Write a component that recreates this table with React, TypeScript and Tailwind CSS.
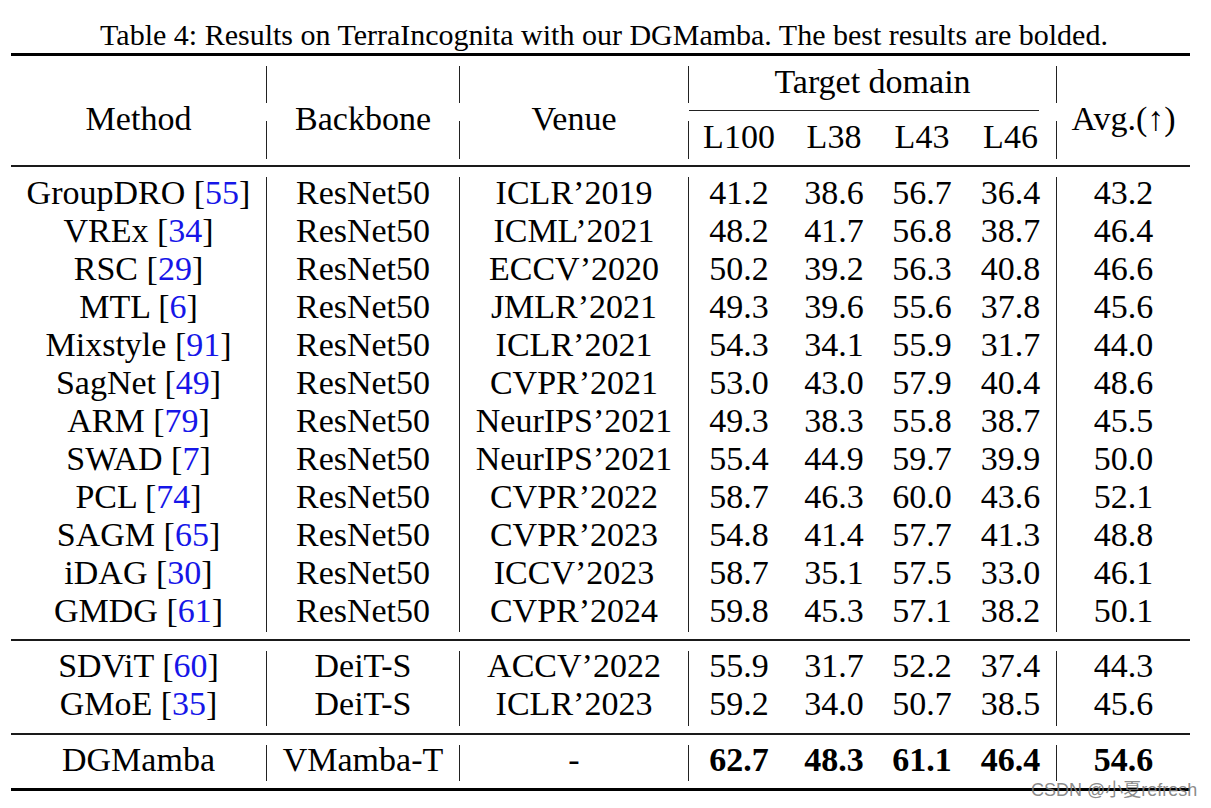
import React from 'react'

type Row = {
  method: string
  cite?:  string
  backbone: string
  venue:  string
  scores: string[]
  avg:    string
  bold?:  boolean
}

const RESNET: Row[] = [
  { method: 'GroupDRO', cite: '55', backbone: 'ResNet50', venue: 'ICLR’2019',    scores: ['41.2', '38.6', '56.7', '36.4'], avg: '43.2' },
  { method: 'VREx',     cite: '34', backbone: 'ResNet50', venue: 'ICML’2021',    scores: ['48.2', '41.7', '56.8', '38.7'], avg: '46.4' },
  { method: 'RSC',      cite: '29', backbone: 'ResNet50', venue: 'ECCV’2020',    scores: ['50.2', '39.2', '56.3', '40.8'], avg: '46.6' },
  { method: 'MTL',      cite: '6',  backbone: 'ResNet50', venue: 'JMLR’2021',    scores: ['49.3', '39.6', '55.6', '37.8'], avg: '45.6' },
  { method: 'Mixstyle', cite: '91', backbone: 'ResNet50', venue: 'ICLR’2021',    scores: ['54.3', '34.1', '55.9', '31.7'], avg: '44.0' },
  { method: 'SagNet',   cite: '49', backbone: 'ResNet50', venue: 'CVPR’2021',    scores: ['53.0', '43.0', '57.9', '40.4'], avg: '48.6' },
  { method: 'ARM',      cite: '79', backbone: 'ResNet50', venue: 'NeurIPS’2021', scores: ['49.3', '38.3', '55.8', '38.7'], avg: '45.5' },
  { method: 'SWAD',     cite: '7',  backbone: 'ResNet50', venue: 'NeurIPS’2021', scores: ['55.4', '44.9', '59.7', '39.9'], avg: '50.0' },
  { method: 'PCL',      cite: '74', backbone: 'ResNet50', venue: 'CVPR’2022',    scores: ['58.7', '46.3', '60.0', '43.6'], avg: '52.1' },
  { method: 'SAGM',     cite: '65', backbone: 'ResNet50', venue: 'CVPR’2023',    scores: ['54.8', '41.4', '57.7', '41.3'], avg: '48.8' },
  { method: 'iDAG',     cite: '30', backbone: 'ResNet50', venue: 'ICCV’2023',    scores: ['58.7', '35.1', '57.5', '33.0'], avg: '46.1' },
  { method: 'GMDG',     cite: '61', backbone: 'ResNet50', venue: 'CVPR’2024',    scores: ['59.8', '45.3', '57.1', '38.2'], avg: '50.1' },
]

const VIT: Row[] = [
  { method: 'SDViT', cite: '60', backbone: 'DeiT-S', venue: 'ACCV’2022', scores: ['55.9', '31.7', '52.2', '37.4'], avg: '44.3' },
  { method: 'GMoE',  cite: '35', backbone: 'DeiT-S', venue: 'ICLR’2023', scores: ['59.2', '34.0', '50.7', '38.5'], avg: '45.6' },
]

const OURS: Row[] = [
  { method: 'DGMamba', backbone: 'VMamba-T', venue: '-', scores: ['62.7', '48.3', '61.1', '46.4'], avg: '54.6', bold: true },
]

// widths of the four target-domain sub columns (L100, L38, L43, L46)
const SUB_W = ['w-[100px]', 'w-[90px]', 'w-[86px]', 'w-[91px]']

function Divider() {
  return <div className="w-px shrink-0 bg-[#222] mt-[10px] mb-[7px]" />
}

// header rules are broken where the cmidrule sits
function HeaderDivider() {
  return (
    <div className="w-px shrink-0 flex flex-col pt-[10px]">
      <div className="h-[37px] bg-[#222]" />
      <div className="h-[18px]" />
      <div className="h-[38px] bg-[#222]" />
    </div>
  )
}

function Cell({ children, bold }: { children: React.ReactNode; bold?: boolean }) {
  return (
    <div className={`h-[38px] leading-[38px] text-center whitespace-nowrap ${bold ? 'font-bold' : ''}`}>
      {children}
    </div>
  )
}

function Section({ rows, pad }: { rows: Row[]; pad: string }) {
  return (
    <div className="flex">
      <div className={`w-[255px] shrink-0 ${pad}`}>
        {rows.map(r => (
          <Cell key={r.method}>
            {r.method}
            {r.cite && <> [<span className="text-[#1616e8]">{r.cite}</span>]</>}
          </Cell>
        ))}
      </div>
      <Divider />
      <div className={`w-[192px] shrink-0 ${pad}`}>
        {rows.map(r => <Cell key={r.method}>{r.backbone}</Cell>)}
      </div>
      <Divider />
      <div className={`w-[228px] shrink-0 ${pad}`}>
        {rows.map(r => <Cell key={r.method}>{r.venue}</Cell>)}
      </div>
      <Divider />
      <div className={`w-[367px] shrink-0 ${pad}`}>
        {rows.map(r => (
          <div key={r.method} className="flex">
            {r.scores.map((s, i) => (
              <div key={i} className={SUB_W[i]}>
                <Cell bold={r.bold}>{s}</Cell>
              </div>
            ))}
          </div>
        ))}
      </div>
      <Divider />
      <div className={`flex-1 ${pad}`}>
        {rows.map(r => <Cell key={r.method} bold={r.bold}>{r.avg}</Cell>)}
      </div>
    </div>
  )
}

export default function App() {
  return (
    <div
      className="relative w-[1211px] h-[808px] bg-white text-black overflow-hidden"
      style={{ fontFamily: '"Liberation Serif", "Times New Roman", serif' }}
    >
      <div className="pt-[20px] pl-[11px]">
        <div className="w-[1179px]">
          <p className="h-[30px] leading-[30px] text-[30px] text-center pl-[7px] whitespace-nowrap">
            Table 4: Results on TerraIncognita with our DGMamba. The best results are bolded.
          </p>

          <div className="mt-[3px] text-[34px]">
            <div className="h-[3px] bg-black" />

            {/* header */}
            <div className="flex h-[109px]">
              <div className="w-[255px] shrink-0 pt-[44px]"><Cell>Method</Cell></div>
              <HeaderDivider />
              <div className="w-[192px] shrink-0 pt-[44px]"><Cell>Backbone</Cell></div>
              <HeaderDivider />
              <div className="w-[228px] shrink-0 pt-[44px]"><Cell>Venue</Cell></div>
              <HeaderDivider />
              <div className="w-[367px] shrink-0">
                <div className="h-[52px] leading-[52px] text-center">Target domain</div>
                <div className="mt-[2px] h-px bg-[#222] mr-[17px]" />
                <div className="flex h-[52px] items-center">
                  {['L100', 'L38', 'L43', 'L46'].map((l, i) => (
                    <div key={l} className={`${SUB_W[i]} text-center leading-[52px]`}>{l}</div>
                  ))}
                </div>
              </div>
              <HeaderDivider />
              <div className="flex-1 pt-[44px]"><Cell>Avg.(↑)</Cell></div>
            </div>

            <div className="h-[2px] bg-[#1a1a1a]" />
            <Section rows={RESNET} pad="pt-[7px] pb-[9px]" />
            <div className="h-[2px] bg-[#1a1a1a]" />
            <Section rows={VIT} pad="pt-[6px] pb-[10px]" />
            <div className="h-[2px] bg-[#1a1a1a]" />
            <Section rows={OURS} pad="pt-[6px] pb-[9px]" />
            <div className="h-[3px] bg-black" />
          </div>
        </div>
      </div>

      {/* CSDN watermark */}
      <div
        className="absolute left-[1031px] top-[780px] text-[18px] leading-[20px] text-[#7c7c7c]/90 whitespace-nowrap"
        style={{ fontFamily: '"Liberation Sans", "Noto Sans CJK SC", sans-serif' }}
      >
        CSDN @小夏refresh
      </div>
    </div>
  )
}
